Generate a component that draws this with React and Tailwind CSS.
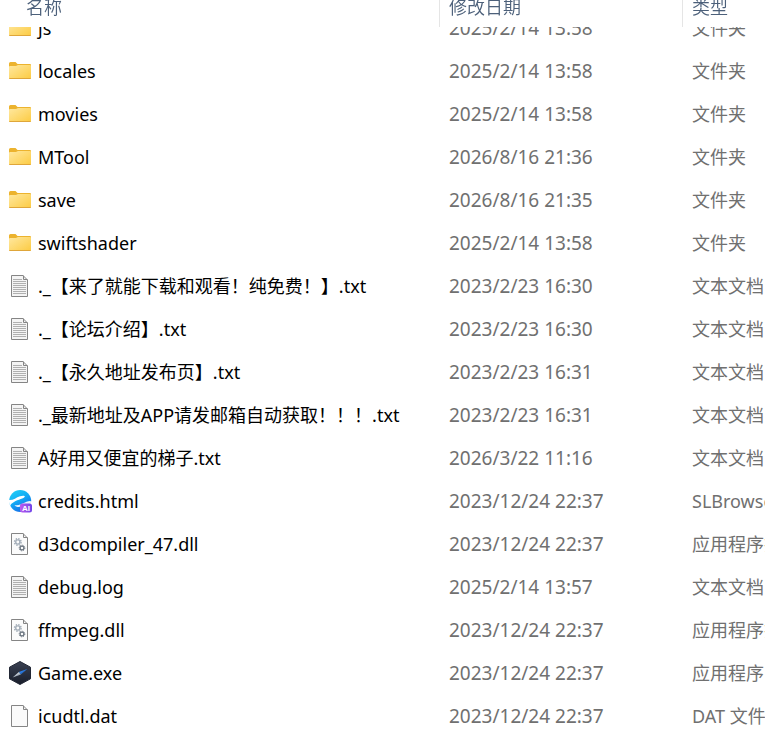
import React, { useLayoutEffect, useRef } from 'react';

const FolderIcon = () => (
  <svg width="22" height="18" viewBox="0 0 22 18" aria-hidden="true">
    <defs>
      <linearGradient id="folderFront" x1="0" y1="0" x2="1" y2="1">
        <stop offset="0" stopColor="#ffe8a0" />
        <stop offset="1" stopColor="#fccb42" />
      </linearGradient>
    </defs>
    <path d="M0 1.5Q0 0 1.5 0H6.5L8.5 2H21Q22 2 22 3V5H0Z" fill="#ecb32e" />
    <path d="M0 5Q0 4 1 4H7L9 3H21Q22 3 22 4V16Q22 17 21 17H1Q0 17 0 16Z" fill="url(#folderFront)" />
    <path d="M0.3 16.5H21.7" stroke="#dfa63a" />
  </svg>
);

const Page = ({ fill, children }) => (
  <svg width="18" height="22" viewBox="0 0 18 22" aria-hidden="true">
    <path d="M0.5 0.5H12L16.5 5V21.5H0.5Z" fill={fill} stroke="#858585" />
    <path d="M12.5 0.5V4.5H16.5" fill="none" stroke="#858585" />
    {children}
  </svg>
);

const TextIcon = () => (
  <Page fill="#f4f4f4">
    <path
      d="M2 4.5H11M2 6.5H15M2 8.5H15M2 10.5H15M2 12.5H15M2 14.5H15M2 16.5H15M2 18.5H15"
      stroke="#b0b0b0"
    />
  </Page>
);

const DllIcon = () => (
  <Page fill="#fbfbfb">
    <circle cx="6.8" cy="9" r="3.3" fill="none" stroke="#a3adb8" strokeWidth="1.4" strokeDasharray="1.5 1.09" />
    <circle cx="6.8" cy="9" r="2.1" fill="none" stroke="#a3adb8" strokeWidth="1.4" />
    <circle cx="11" cy="15" r="2.8" fill="none" stroke="#68727d" strokeWidth="1" strokeDasharray="1.2 1" />
    <circle cx="11" cy="15" r="1.9" fill="none" stroke="#68727d" strokeWidth="1.2" />
  </Page>
);

const FileIcon = () => <Page fill="#fafafa" />;

const BrowserIcon = () => (
  <svg width="23" height="24" viewBox="0 0 23 24" className="shrink-0" aria-hidden="true">
    <defs>
      <linearGradient id="swirl" x1="0" y1="0" x2="0.6" y2="1">
        <stop offset="0" stopColor="#22d3f5" />
        <stop offset="0.5" stopColor="#12aef5" />
        <stop offset="1" stopColor="#176be8" />
      </linearGradient>
      <linearGradient id="aiBadge" x1="0" y1="0" x2="1" y2="0">
        <stop offset="0" stopColor="#c05af0" />
        <stop offset="1" stopColor="#6d45e8" />
      </linearGradient>
    </defs>
    <circle cx="11.2" cy="12" r="11" fill="url(#swirl)" />
    <path d="M0 11C4 11.5 7 8.5 11 7.2C14 6.3 16.2 6.6 15.8 7.8C15.2 9.4 9 10.6 5 13C2.8 14.2 1.6 15.4 1.3 16.7C0.2 15 -0.2 13 0 11Z" fill="#ffffff" />
    <path d="M5.5 16.2C9.5 17 13.5 14.6 17.5 12.8C19.8 11.9 21.8 11.8 23 12.6V15H11.5V17.8C9 18.2 6.6 17.8 5.5 16.2Z" fill="#ffffff" opacity="0.9" />
    <rect x="11" y="14.5" width="12" height="9" rx="2.5" fill="url(#aiBadge)" />
    <text x="17" y="21.8" textAnchor="middle" fontSize="8" fontWeight="700" fontFamily="Liberation Sans, sans-serif" fill="#ffffff">AI</text>
  </svg>
);

const GameIcon = () => (
  <svg width="22" height="24" viewBox="0 0 22 24" aria-hidden="true">
    <defs>
      <linearGradient id="hex" x1="0" y1="0" x2="0" y2="1">
        <stop offset="0" stopColor="#3a4152" />
        <stop offset="1" stopColor="#191e2b" />
      </linearGradient>
    </defs>
    <path d="M11 0.5L21.5 6.2V17.8L11 23.5L0.5 17.8V6.2Z" fill="url(#hex)" stroke="#222735" strokeLinejoin="round" />
    <path d="M18.3 8L9.8 11L11.8 13.4Z" fill="#2d7fe8" />
    <path d="M3.6 16.6L9.8 11L11.8 13.4Z" fill="#c3ccd7" />
    <path d="M3.6 16.6L18.3 8L11.8 13.4Z" fill="#111827" opacity="0.2" />
  </svg>
);

const icons = {
  folder: FolderIcon,
  text: TextIcon,
  dll: DllIcon,
  file: FileIcon,
  browser: BrowserIcon,
  game: GameIcon,
};

const files = [
  { name: 'js', date: '2025/2/14 13:58', type: '文件夹', icon: 'folder' },
  { name: 'locales', date: '2025/2/14 13:58', type: '文件夹', icon: 'folder' },
  { name: 'movies', date: '2025/2/14 13:58', type: '文件夹', icon: 'folder' },
  { name: 'MTool', date: '2026/8/16 21:36', type: '文件夹', icon: 'folder' },
  { name: 'save', date: '2026/8/16 21:35', type: '文件夹', icon: 'folder' },
  { name: 'swiftshader', date: '2025/2/14 13:58', type: '文件夹', icon: 'folder' },
  { name: '._【来了就能下载和观看！纯免费！】.txt', date: '2023/2/23 16:30', type: '文本文档', icon: 'text' },
  { name: '._【论坛介绍】.txt', date: '2023/2/23 16:30', type: '文本文档', icon: 'text' },
  { name: '._【永久地址发布页】.txt', date: '2023/2/23 16:31', type: '文本文档', icon: 'text' },
  { name: '._最新地址及APP请发邮箱自动获取！！！.txt', date: '2023/2/23 16:31', type: '文本文档', icon: 'text' },
  { name: 'A好用又便宜的梯子.txt', date: '2026/3/22 11:16', type: '文本文档', icon: 'text' },
  { name: 'credits.html', date: '2023/12/24 22:37', type: 'SLBrowser HTML', icon: 'browser' },
  { name: 'd3dcompiler_47.dll', date: '2023/12/24 22:37', type: '应用程序扩展', icon: 'dll' },
  { name: 'debug.log', date: '2025/2/14 13:57', type: '文本文档', icon: 'text' },
  { name: 'ffmpeg.dll', date: '2023/12/24 22:37', type: '应用程序扩展', icon: 'dll' },
  { name: 'Game.exe', date: '2023/12/24 22:37', type: '应用程序', icon: 'game' },
  { name: 'icudtl.dat', date: '2023/12/24 22:37', type: 'DAT 文件', icon: 'file' },
];

const App = () => {
  const listRef = useRef(null);

  // the list opens slightly scrolled, with the first row under the header
  useLayoutEffect(() => {
    listRef.current.scrollTop = 21;
  }, []);

  return (
    <div
      ref={listRef}
      className="h-screen overflow-x-hidden overflow-y-auto bg-white text-[18px] font-['Noto_Sans','Noto_Sans_CJK_SC',sans-serif] [scrollbar-width:none]"
    >
      <table className="w-full table-fixed border-separate border-spacing-0 text-left whitespace-nowrap">
        <thead className="sticky top-0 z-10 bg-white text-[#4c607a]">
          <tr className="h-[27px] align-top leading-[14px]">
            <th scope="col" className="w-[440px] border-r border-[#e5e5e5] pl-[26px] font-[360]">名称</th>
            <th scope="col" className="w-[243px] border-r border-[#e5e5e5] pl-[9px] font-[360]">修改日期</th>
            <th scope="col" className="pl-[9px] font-[360]">类型</th>
          </tr>
        </thead>
        <tbody>
          {files.map((file) => {
            const Icon = icons[file.icon];
            return (
              <tr key={file.name} className="h-[43px] text-[#707070]">
                <td className="pl-[9px] text-black">
                  <div className="flex items-center gap-[7px]">
                    <span className="flex w-[22px] shrink-0 justify-center">
                      <Icon />
                    </span>
                    <span className="leading-6">{file.name}</span>
                  </div>
                </td>
                <td className="pl-[9px] text-[19px] leading-6">{file.date}</td>
                <td className="overflow-hidden pl-[9px] leading-6 font-[390]">{file.type}</td>
              </tr>
            );
          })}
        </tbody>
      </table>
    </div>
  );
};

export default App;
